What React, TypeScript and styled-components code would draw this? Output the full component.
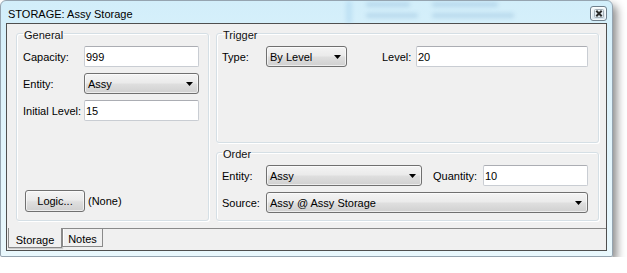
import React from 'react';
import styled, { createGlobalStyle } from 'styled-components';

const GlobalStyle = createGlobalStyle`
  html, body {
    margin: 0;
    padding: 0;
    background: #fff;
  }
  body {
    font-family: "Liberation Sans", Arial, sans-serif;
    font-size: 11px;
    color: #000;
  }
`;

const Window = styled.div`
  position: relative;
  width: 613px;
  height: 257px;
  box-sizing: border-box;
  border: 1px solid #95a4b0;
  border-radius: 6px 6px 2px 2px;
  background: linear-gradient(180deg, #d2eefa 0%, #dcf2fb 30%, #e9f8fd 100%);
  box-shadow: 4px 5px 9px rgba(0, 0, 0, 0.45);
  display: flex;
  flex-direction: column;
  overflow: hidden;
`;

const TitleBar = styled.div`
  position: relative;
  height: 22px;
  display: flex;
  align-items: flex-start;
  padding-left: 7px;
`;

const Title = styled.div`
  position: relative;
  z-index: 1;
  flex: 1;
  padding-top: 4px;
  line-height: 18px;
  white-space: nowrap;
`;

// blurred shapes of the window that sits behind the glass title bar
const Backdrop = styled.div`
  position: absolute;
  top: 0;
  left: 345px;
  height: 22px;
  display: flex;
  gap: 14px;
  filter: blur(2px);
  opacity: 0.2;
  pointer-events: none;
`;

const BackdropBar = styled.div`
  width: 6px;
  height: 22px;
  background: #6aa9da;
`;

const BackdropLines = styled.div`
  display: flex;
  flex-direction: column;
  gap: 6px;
  padding-top: 1px;
`;

const Smudge = styled.div<{ $w: number }>`
  width: ${(p) => p.$w}px;
  height: 5px;
  border-radius: 2px;
  background: #4d86b8;
`;

const CloseButton = styled.div`
  position: relative;
  z-index: 1;
  margin: 5px 5px 0 0;
  width: 17px;
  height: 15px;
  box-sizing: border-box;
  border: 1px solid #6f7f8c;
  border-radius: 3px;
  background: linear-gradient(180deg, #f7fbfd 0%, #e6eff5 50%, #d6e4ee 100%);
  box-shadow: inset 0 0 0 1px rgba(255, 255, 255, 0.7);
  display: flex;
  align-items: center;
  justify-content: center;
`;

const Client = styled.div`
  flex: 1;
  margin: 0 5px 5px;
  border: 1px solid #4f4f4f;
  background: #f0f0f0;
  display: flex;
  flex-direction: column;
  min-height: 0;
`;

const Pane = styled.div`
  flex: 1;
  display: grid;
  grid-template-columns: 193px 383px;
  column-gap: 7px;
  padding: 1px 7px 7px 9px;
`;

const Column = styled.div`
  display: flex;
  flex-direction: column;
  gap: 1px;
`;

const Group = styled.fieldset<{ $grow?: boolean; $pad: string }>`
  margin: 0;
  min-width: 0;
  padding: ${(p) => p.$pad};
  border: 1px solid #d5dfe5;
  border-radius: 3px;
  box-shadow: inset 1px 1px 0 #fff, 1px 1px 0 #fff;
  display: flex;
  flex-direction: column;
  flex: ${(p) => (p.$grow ? 1 : 'none')};
`;

const Legend = styled.legend`
  padding: 3px 1px 0;
  line-height: 14px;
  color: #111;
`;

const FormGrid = styled.div`
  display: grid;
  grid-template-columns: 61px 115px;
  row-gap: 6px;
  align-items: center;
`;

const OrderGrid = styled.div`
  display: grid;
  grid-template-columns: 44px 156px 61px 105px;
  row-gap: 6px;
  align-items: center;
`;

const Row = styled.div`
  display: flex;
  align-items: center;
`;

const Label = styled.span<{ $w?: number; $ml?: number; $pl?: number }>`
  white-space: nowrap;
  line-height: 14px;
  ${(p) => (p.$w ? `width: ${p.$w}px; flex: none;` : '')}
  ${(p) => (p.$ml ? `margin-left: ${p.$ml}px;` : '')}
  ${(p) => (p.$pl ? `padding-left: ${p.$pl}px;` : '')}
`;

const TextInput = styled.input`
  width: 100%;
  height: 21px;
  box-sizing: border-box;
  margin: 0;
  padding: 0 1px;
  border: 1px solid #c9cdd3;
  border-top-color: #abadb3;
  border-radius: 2px;
  background: #fff;
  font: inherit;
  color: #000;
  outline: none;
  flex: 1;
  min-width: 0;
`;

const Combo = styled.div<{ $w?: number; $span?: boolean }>`
  height: 21px;
  box-sizing: border-box;
  ${(p) => (p.$w ? `width: ${p.$w}px; flex: none;` : 'width: 100%;')}
  ${(p) => (p.$span ? 'grid-column: 2 / -1;' : '')}
  border: 1px solid #707070;
  border-radius: 3px;
  background: linear-gradient(180deg, #f4f4f4 0%, #ebebeb 45%, #dedede 55%, #d0d0d0 100%);
  box-shadow: inset 0 0 0 1px rgba(255, 255, 255, 0.6);
  display: flex;
  align-items: center;
  justify-content: space-between;
  padding: 0 5px 0 3px;
  line-height: 14px;
  white-space: nowrap;
`;

const Arrow = () => (
  <svg width="7" height="4" viewBox="0 0 7 4">
    <polygon points="0,0 7,0 3.5,4" fill="#000" />
  </svg>
);

const ButtonRow = styled.div`
  margin-top: auto;
  display: flex;
  align-items: center;
  gap: 3px;
  padding-left: 2px;
`;

const Button = styled.button`
  width: 60px;
  height: 22px;
  margin: 0;
  padding: 0;
  border: 1px solid #707070;
  border-radius: 3px;
  background: linear-gradient(180deg, #f4f4f4 0%, #ebebeb 45%, #dedede 55%, #d0d0d0 100%);
  box-shadow: inset 0 0 0 1px rgba(255, 255, 255, 0.6);
  font: inherit;
  color: #000;
`;

const TabBar = styled.div`
  height: 22px;
  display: flex;
  align-items: flex-start;
  padding-left: 1px;
`;

const Tab = styled.div<{ $active?: boolean }>`
  box-sizing: border-box;
  border: 1px solid #8a8a8a;
  text-align: center;
  line-height: ${(p) => (p.$active ? 13 : 14)}px;
  white-space: nowrap;
  background: #f0f0f0;
  ${(p) =>
    p.$active
      ? `
    width: 54px;
    height: 20px;
    border-top: none;
    padding-top: 6px;
    box-shadow: 1px 1px 1px rgba(0,0,0,0.15);
  `
      : `
    width: 41px;
    height: 19px;
    padding-top: 3px;
    box-shadow: inset 1px 0 0 #fff;
  `}
`;

const TabFiller = styled.div`
  flex: 1;
  border-top: 1px solid #8a8a8a;
`;

export default function App() {
  return (
    <>
      <GlobalStyle />
      <Window>
        <TitleBar>
          <Backdrop>
            <BackdropBar />
            <BackdropLines>
              <Smudge $w={44} />
              <Smudge $w={52} />
            </BackdropLines>
            <BackdropLines>
              <Smudge $w={66} />
              <Smudge $w={82} />
            </BackdropLines>
          </Backdrop>
          <Title>STORAGE: Assy Storage</Title>
          <CloseButton>
            <svg width="10" height="9" viewBox="0 0 10 9">
              <rect x="0.5" y="0.5" width="9" height="8" rx="1" fill="none" stroke="#a4aeb6" />
              <path d="M2.3 1.8 L7.7 7.2 M7.7 1.8 L2.3 7.2" stroke="#2b2b2b" strokeWidth="2" />
            </svg>
          </CloseButton>
        </TitleBar>
        <Client>
          <Pane>
            <Group $pad="4px 9px 8px 6px">
              <Legend>General</Legend>
              <FormGrid>
                <Label>Capacity:</Label>
                <TextInput readOnly value="999" />
                <Label>Entity:</Label>
                <Combo>
                  <span>Assy</span>
                  <Arrow />
                </Combo>
                <Label>Initial Level:</Label>
                <TextInput readOnly value="15" />
              </FormGrid>
              <ButtonRow>
                <Button>Logic...</Button>
                <Label>(None)</Label>
              </ButtonRow>
            </Group>
            <Column>
              <Group $grow $pad="4px 10px 7px 5px">
                <Legend>Trigger</Legend>
                <Row>
                  <Label $w={44}>Type:</Label>
                  <Combo $w={81}>
                    <span>By Level</span>
                    <Arrow />
                  </Combo>
                  <Label $w={34} $ml={35}>Level:</Label>
                  <TextInput readOnly value="20" />
                </Row>
              </Group>
              <Group $pad="4px 10px 7px 5px">
                <Legend>Order</Legend>
                <OrderGrid>
                  <Label>Entity:</Label>
                  <Combo>
                    <span>Assy</span>
                    <Arrow />
                  </Combo>
                  <Label $pl={11}>Quantity:</Label>
                  <TextInput readOnly value="10" />
                  <Label>Source:</Label>
                  <Combo $span>
                    <span>Assy @ Assy Storage</span>
                    <Arrow />
                  </Combo>
                </OrderGrid>
              </Group>
            </Column>
          </Pane>
          <TabBar>
            <Tab $active>Storage</Tab>
            <Tab>Notes</Tab>
            <TabFiller />
          </TabBar>
        </Client>
      </Window>
    </>
  );
}
